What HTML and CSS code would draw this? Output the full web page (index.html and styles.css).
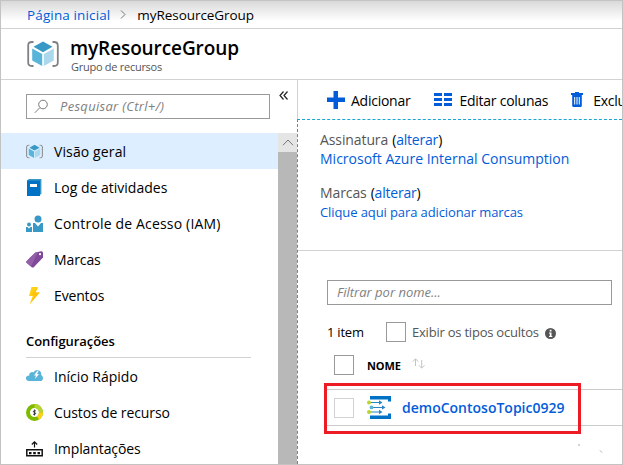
FILE: index.html
```html
<!DOCTYPE html>
<html lang="pt">
<head>
<meta charset="utf-8">
<title>myResourceGroup</title>
<link rel="stylesheet" href="styles.css">
</head>
<body>
<svg width="0" height="0" class="defs">
  <symbol id="cube" viewBox="0 0 32 26">
    <path d="M6.500 1H5Q1.200 1 1.200 4.500V21.500Q1.200 25 5 25H6.500M25.500 1H27Q30.800 1 30.800 4.500V21.500Q30.800 25 27 25H25.500" fill="none" stroke="#7f8184" stroke-width="1.8"/>
    <path d="M16 .5 25.500 5.800 16 11.200 6.500 5.800Z" fill="#3999c6"/>
    <path d="M5.200 7.500 15.200 13V25L5.200 19.500Z" fill="#59b4d9"/>
    <path d="M26.800 7.500 16.800 13V25L26.800 19.500Z" fill="#acd8ed"/>
  </symbol>
</svg>
<div class="portal">
  <nav class="crumbs"><a class="crumb-home">Página inicial</a><svg class="chev" viewBox="0 0 6 9"><path d="M1 .5 5 4.500 1 8.500" fill="none" stroke="#777"/></svg><span class="crumb-here">myResourceGroup</span></nav>
  <header class="head">
    <svg class="head-icon"><use href="#cube"/></svg>
    <div><h1>myResourceGroup</h1><p>Grupo de recursos</p></div>
  </header>
  <div class="body">
    <aside class="side">
      <div class="search-row">
        <div class="search"><svg viewBox="0 0 15 15"><circle cx="9" cy="5.500" r="4.300"/><path d="M6 8.500 .8 13.800"/></svg><span class="search-text">Pesquisar (Ctrl+/)</span></div>
        <svg class="collapse" viewBox="0 0 9 9"><path d="M4.500 .5 1 4.500 4.500 8.500M8.500 .5 5 4.500 8.500 8.500" fill="none" stroke="#222" stroke-width="1.200"/></svg>
      </div>
      <div class="list">
        <div class="menu">
          <a class="item active"><svg viewBox="0 0 32 26"><use href="#cube"/></svg><span class="m1">Visão geral</span></a>
          <a class="item"><svg viewBox="0 0 17 17"><path d="M2.500 0H15.500V15H14Z" fill="#59b4d9"/><path d="M1 1.500 3 0H15V15L14 16Z" fill="#3999c6"/><path d="M1 1.500H14V17H1Z" fill="#0072c6"/><path d="M4 5H11V8H4Z" fill="#fff"/></svg><span class="m2">Log de atividades</span></a>
          <a class="item"><svg viewBox="0 0 17 17"><g fill="#3999c6"><circle cx="12" cy="4" r="3.500"/><path d="M7 8H9L12 11.500 15 8H17V17H7Z"/></g><g fill="#3999c6"><circle cx="3" cy="9.500" r="2"/><path d="M0 12H1.500L3 13.500 4.500 12H6V17H0Z"/></g></svg><span class="m3">Controle de Acesso (IAM)</span></a>
          <a class="item"><svg viewBox="0 0 17 17"><path d="M9.500 1.500 15 .3Q17 0 17 2V6.500L7.500 16.500 6 16.500.3 11.500V10.500Z" fill="#804998"/><path d="M9.500 1.500 4 6.500.3 10.500V11.500L5 15.600 12 1Z" fill="#925fa8"/><circle cx="14" cy="3.200" r="1.100" fill="#fff"/></svg><span class="m4">Marcas</span></a>
          <a class="item"><svg viewBox="0 0 17 17"><path d="M5.500 0H12L9.500 5.500H13.700L3.800 17 6.800 9H3Z" fill="#fcd116"/><path d="M12 0 9.500 5.500H13.700L3.800 17 8 8H5Z" fill="#ffc20a"/></svg><span class="m5">Eventos</span></a>
          <h2><span>Configurações</span></h2>
          <a class="item"><svg viewBox="0 0 17 17"><path d="M3.200 13Q0 13 0 10.300 0 7.600 3.300 7.500 2.600 5.500 4.600 4.500 6.500 3.700 7.500 4.500 8.500 1.800 11.500 2Q15.500 2.500 15.200 7 17 8 17 10.200 16.800 13 14.200 13Z" fill="#59b4d9"/><path d="M11.500 2.500 8 7.500H10L9 11 13 6H11L12.800 2.500Z" fill="#fff"/></svg><span class="m6">Início Rápido</span></a>
          <a class="item"><svg viewBox="0 0 17 17"><circle cx="8.500" cy="8.500" r="6.500" fill="#fff" stroke="#7fba00" stroke-width="4"/><path d="M8.500 2A6.500 6.500 0 0 1 15 8.500" fill="none" stroke="#b8d432" stroke-width="4"/><path d="M15 8.500A6.500 6.500 0 0 1 12 14" fill="none" stroke="#fcd116" stroke-width="4"/><path d="M10 7Q8.500 6 7.500 7T8.500 8.500 9.500 10 7 10.200M8.500 5.500V11.500" fill="none" stroke="#333" stroke-width=".9"/></svg><span class="m7">Custos de recurso</span></a>
          <a class="item"><svg viewBox="0 0 17 17"><path d="M.8 9.800H16.200V15.700H.8Z" fill="none" stroke="#111" stroke-width="1.500"/><path d="M3 12H5.500V14.200H3ZM7.200 12H9.800V14.200H7.200ZM11.500 12H14V14.200H11.500Z" fill="#111"/><path d="M8.500 7.500V2M5.800 4.500 8.500 1.800 11.200 4.500" fill="none" stroke="#111" stroke-width="1.200"/></svg><span class="m8">Implantações</span></a>
        </div>
        <div class="scroll"><div class="up"><svg viewBox="0 0 12 7"><path d="M1 6.200 6 1 11 6.200" fill="none" stroke="#777"/></svg></div></div>
      </div>
    </aside>
    <main class="main">
      <div class="toolbar">
        <svg class="plus" viewBox="0 0 18 18"><path d="M6.500 0H11V6.500H18V11H11V18H6.500V11H0V6.500H6.500Z"/></svg><span class="b1">Adicionar</span>
        <svg class="cols" viewBox="0 0 18 13"><path d="M0 0H8V3H0ZM10 0H18V3H10ZM0 5H8V8H0ZM10 5H18V8H10ZM0 10H8V13H0ZM10 10H18V13H10Z"/></svg><span class="b2">Editar colunas</span>
        <svg class="trash" viewBox="0 0 12 15"><path d="M4 0H8V1H12V3H0V1H4Z"/><path d="M1.200 3H10.800V13.500Q10.800 15 9.500 15H2.500Q1.200 15 1.200 13.500Z"/><path d="M3.700 5V12.500M6 5V12.500M8.300 5V12.500" stroke="#fff" stroke-width="1"/></svg><span class="b3">Excluir</span>
      </div>
      <div class="content">
        <section class="facts">
          <div class="fact"><span class="f1">Assinatura</span><span class="chg">(<a>alterar</a>)</span></div>
          <div class="fact second"><a class="f2">Microsoft Azure Internal Consumption</a></div>
          <div class="fact"><span class="f3">Marcas</span><span class="chg">(<a>alterar</a>)</span></div>
          <div class="fact last"><a class="f4">Clique aqui para adicionar marcas</a></div>
        </section>
        <section class="items">
          <div class="filter"><span>Filtrar por nome...</span></div>
          <div class="count"><span class="n">1 item</span><i class="box"></i><span class="hid">Exibir os tipos ocultos</span><svg viewBox="0 0 11 11"><circle cx="5.500" cy="5.500" r="5.500" fill="#555"/><path d="M4.700 1.800H6.500V3.500H4.700ZM4 4.500H6.500V8H7.300V9H4V8H4.800V5.500H4Z" fill="#fff"/></svg></div>
          <div class="thead"><i class="box"></i><span>NOME</span><svg viewBox="0 0 13 11"><path d="M3.500 8V1M.7 3.700 3.500 .8 6.300 3.700M9.700 2V10M6.900 7.300 9.700 10.200 12.500 7.300" fill="none" stroke="#c4c4c4"/></svg></div>
          <div class="row">
            <i class="box"></i>
            <svg viewBox="0 0 24 23"><path d="M3 0H24V5.500H21V3.500H3ZM3 23H24V17.500H21V19.500H3Z" fill="#0072c6"/><path d="M3 6H12V4.300L15.500 6.500 12 8.700V7H3ZM3 15.500H12V13.800L15.500 16 12 18.200V16.500H3ZM5 10.900H15V9.200L18.500 11.400 15 13.600V11.900H5Z" fill="#2a85c4"/><g fill="#b8d432"><circle cx="2" cy="6.500" r="2"/><circle cx="2" cy="16" r="2"/></g><circle cx="4.500" cy="11.400" r="1.900" fill="#59b4d9"/></svg>
            <a>demoContosoTopic0929</a>
            <div class="mark"></div>
          </div>
          <svg class="specks" viewBox="0 0 26 9"><path d="M0 1H2M22 6.500 24 8.500" stroke="#aaa"/></svg>
        </section>
      </div>
    </main>
  </div>
</div>
</body>
</html>
```
FILE: styles.css
```css
* { box-sizing: border-box; }
body { margin: 0; font-family: "Open Sans", "Noto Sans", sans-serif; font-size: 14px; color: #000; }
.defs { position: absolute; }
h1, h2, p { margin: 0; }
a { color: #015cda; }
span, a, h1, p { white-space: nowrap; }
svg { flex: none; display: block; }
i.box { display: block; flex: none; width: 20px; height: 20px; border: 1px solid #999; background: #fff; }

.portal { width: 623px; height: 465px; border: 1px solid #c3c3c3; overflow: hidden; display: flex; flex-direction: column; background: #fff; }
.crumbs { height: 28px; flex: none; display: flex; align-items: center; padding-left: 26px; border-bottom: 1px solid #d2d2d2; background: linear-gradient(#d9d9d9, #fff 20px); font-size: 13.5px; }
.crumb-home { letter-spacing: .13px; }
.crumb-here { letter-spacing: -.06px; }
.chev { width: 6px; height: 9px; margin: 0 11px 0 10px; }
.head { height: 51px; flex: none; display: flex; padding: 12px 0 0 26px; border-bottom: 1px solid #d2d2d2; }
.head-icon { width: 32px; height: 26px; margin-right: 11px; }
h1 { font-size: 19px; line-height: 24px; font-weight: 600; margin-top: -5px; letter-spacing: -.1px; }
.head p { font-size: 11px; line-height: 15px; margin-top: -1px; color: #555; letter-spacing: -.27px; padding-left: 1px; }
.body { flex: 1; display: flex; min-height: 0; }

.side { width: 296px; flex: none; display: flex; flex-direction: column; }
.search-row { height: 53px; flex: none; display: flex; padding: 14px 0 0 25px; }
.search { width: 244px; height: 25px; border: 1px solid #999; display: flex; align-items: center; }
.search svg { width: 15px; height: 15px; margin: 0 11px 0 7px; fill: none; stroke: #777; }
.search-text, .filter span { font-style: italic; color: #808080; font-size: 13px; }
.search-text { letter-spacing: .3px; margin-top: -2px; }
.filter span { margin-top: -1px; }
.collapse { width: 9px; height: 9px; margin: -3px 0 0 9px; }
.list { flex: 1; display: flex; min-height: 0; }
.menu { width: 277px; overflow: hidden; }
.item { height: 36px; display: flex; align-items: center; padding-left: 25px; color: #000; }
.item svg { width: 17px; height: 17px; margin-right: 11px; }
.m1 { letter-spacing: .12px; }
.m3 { letter-spacing: .17px; }
.m4, .m7, .m8 { letter-spacing: -.1px; }
.m5 { letter-spacing: -.15px; }
.active { background: #dceeff; }
h2 { margin: 0 27px 0 25px; height: 45px; border-bottom: 1px solid #d2d2d2; font-size: 13px; font-weight: 600; padding-top: 18px; line-height: 20px; letter-spacing: -.07px; }
.scroll { width: 19px; background: #b8b8b8; }
.up { height: 19px; background: #e5e5e5; display: flex; justify-content: center; align-items: center; }
.up svg { width: 12px; height: 7px; }

.main { flex: 1; min-width: 0; display: flex; flex-direction: column; }
.toolbar { height: 39px; flex: none; display: flex; align-items: center; padding-left: 29px; border-left: 1px solid #d2d2d2; overflow: hidden; letter-spacing: -.25px; }
.toolbar svg { fill: #015cda; }
.toolbar span { position: relative; top: 1px; }
.plus { width: 18px; height: 18px; margin-right: 6px; }
.cols { width: 18px; height: 13px; margin: 0 7px 0 24px; }
.trash { width: 12px; height: 15px; margin: 0 10px 0 23px; }
.content { flex: 1; border-top: 1px dashed #18a5d6; border-left: 1px dashed #18a5d6; }
.facts { height: 131px; border-bottom: 1px solid #d2d2d2; padding: 10px 0 0 22px; }
.fact { height: 20px; line-height: 20px; color: #555; display: flex; }
.second { margin: -1px 0 14px; }
.last { margin-top: -1px; }
.chg { color: #000; margin-left: 4px; letter-spacing: -.2px; }
.f1, .f3 { letter-spacing: -.1px; }
.f4 { font-size: 13px; letter-spacing: -.1px; }
.items { padding: 29px 0 0 29px; }
.filter { width: 285px; height: 25px; border: 1px solid #999; display: flex; align-items: center; padding-left: 9px; }
.count { height: 20px; margin-top: 17px; display: flex; align-items: center; font-size: 13px; letter-spacing: -.22px; }
.count .n { width: 59px; }
.count .hid { color: #555; margin: 0 6px 0 6px; }
.count svg { width: 11px; height: 11px; margin-top: 2px; }
.thead { margin: 13px 0 0 7px; height: 20px; display: flex; align-items: center; font-size: 11px; font-weight: 700; letter-spacing: -.1px; }
.thead span { margin: 0 11px 0 13px; }
.thead svg { width: 13px; height: 11px; margin-top: -3px; }
.row { position: relative; margin-top: 14px; height: 37px; border-top: 1px solid #ccc; border-bottom: 1px solid #ccc; display: flex; align-items: center; padding-left: 7px; }
.row .box { border-color: #d2d2d2; }
.row svg { width: 24px; height: 23px; margin: 0 11px 0 13px; }
.row a { font-weight: 600; font-size: 14px; }
.mark { position: absolute; left: -3px; top: -7px; width: 257px; height: 51px; border: 3px solid #ed1c24; }
.specks { width: 26px; height: 9px; margin: 18px 0 0 251px; }
```
